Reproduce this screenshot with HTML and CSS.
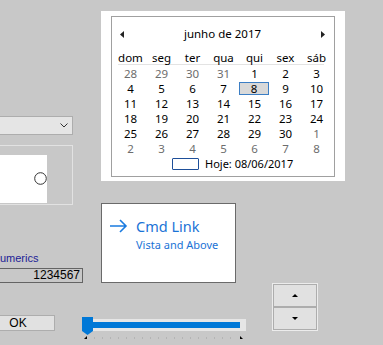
FILE: index.html
```html
<!DOCTYPE html>
<html lang="pt">
<head>
<meta charset="utf-8">
<link rel="stylesheet" href="styles.css">
</head>
<body>
<div class="page">
  <div class="top">
    <div class="left">
      <div class="combo">
        <svg class="chev" width="8" height="5" viewBox="0 0 8 5"><path d="M0.5 0.5 L4 4 L7.5 0.5" fill="none" stroke="#333" stroke-width="1"/></svg>
      </div>
      <div class="group">
        <div class="panel">
          <svg class="radio" width="13" height="13" viewBox="0 0 13 13"><circle cx="6.5" cy="6.5" r="5.8" fill="#fff" stroke="#333" stroke-width="1"/></svg>
        </div>
      </div>
      <div class="label">Numerics</div>
      <div class="textbox">1234567</div>
    </div>
    <div class="right">
      <div class="cal">
        <div class="cal-inner">
          <div class="cal-head">
            <svg width="4" height="7" viewBox="0 0 4 7"><path d="M4 0 L0 3.5 L4 7 Z" fill="#222"/></svg>
            <span class="cal-title">junho de 2017</span>
            <svg width="4" height="7" viewBox="0 0 4 7"><path d="M0 0 L4 3.5 L0 7 Z" fill="#222"/></svg>
          </div>
          <div class="cal-grid dow">
            <span>dom</span><span>seg</span><span>ter</span><span>qua</span><span>qui</span><span>sex</span><span>sáb</span>
          </div>
          <div class="cal-sep"></div>
          <div class="cal-grid days">
            <span class="o">28</span><span class="o">29</span><span class="o">30</span><span class="o">31</span><span>1</span><span>2</span><span>3</span>
            <span>4</span><span>5</span><span>6</span><span>7</span><span class="today">8</span><span>9</span><span>10</span>
            <span>11</span><span>12</span><span>13</span><span>14</span><span>15</span><span>16</span><span>17</span>
            <span>18</span><span>19</span><span>20</span><span>21</span><span>22</span><span>23</span><span>24</span>
            <span>25</span><span>26</span><span>27</span><span>28</span><span>29</span><span>30</span><span class="o">1</span>
            <span class="o">2</span><span class="o">3</span><span class="o">4</span><span class="o">5</span><span class="o">6</span><span class="o">7</span><span class="o">8</span>
          </div>
          <div class="cal-foot">
            <span class="hoje-box"></span>
            <span class="hoje-text">Hoje: 08/06/2017</span>
          </div>
        </div>
      </div>
      <div class="cmd">
        <svg class="cmd-arrow" width="18" height="20" viewBox="0 0 18 20"><path d="M0 10 H16 M10 4 L16 10 L10 16" fill="none" stroke="#1a7be0" stroke-width="1.6"/></svg>
        <div class="cmd-text">
          <div class="cmd-title">Cmd Link</div>
          <div class="cmd-sub">Vista and Above</div>
        </div>
      </div>
    </div>
  </div>
  <div class="bottom">
    <div class="btn">OK</div>
    <div class="slider">
      <div class="track"><div class="fill"></div></div>
      <svg class="thumb" width="11" height="18" viewBox="0 0 11 18"><path d="M0 0 H11 V14 L5.5 18 L0 14 Z" fill="#0078d7"/></svg>
      <svg class="ticks" width="164" height="4" viewBox="0 0 164 4">
        <path d="M5 0 L5 3 L2 3 Z" fill="#000"/>
        <path d="M158 0 L158 3 L161 3 Z" fill="#000"/>
        <g fill="#b4b4b4">
          <rect x="12" y="1" width="1" height="2"/><rect x="20" y="1" width="1" height="2"/><rect x="28" y="1" width="1" height="2"/><rect x="36" y="1" width="1" height="2"/><rect x="44" y="1" width="1" height="2"/><rect x="52" y="1" width="1" height="2"/><rect x="60" y="1" width="1" height="2"/><rect x="68" y="1" width="1" height="2"/><rect x="76" y="1" width="1" height="2"/><rect x="84" y="1" width="1" height="2"/><rect x="92" y="1" width="1" height="2"/><rect x="100" y="1" width="1" height="2"/><rect x="108" y="1" width="1" height="2"/><rect x="116" y="1" width="1" height="2"/><rect x="124" y="1" width="1" height="2"/><rect x="132" y="1" width="1" height="2"/><rect x="140" y="1" width="1" height="2"/><rect x="148" y="1" width="1" height="2"/>
        </g>
      </svg>
    </div>
    <div class="spin">
      <div class="spin-btn"><svg width="6" height="3" viewBox="0 0 6 3"><path d="M0 3 L3 0 L6 3 Z" fill="#000"/></svg></div>
      <div class="spin-btn"><svg width="6" height="3" viewBox="0 0 6 3"><path d="M0 0 L6 0 L3 3 Z" fill="#000"/></svg></div>
    </div>
  </div>
</div>
</body>
</html>
```

FILE: styles.css
```css
html, body {
  margin: 0;
  padding: 0;
}
body {
  background: #c8c8c8;
  width: 383px;
  height: 345px;
  overflow: hidden;
  font-family: "Noto Sans", "Open Sans", sans-serif;
}
.page {
  display: flex;
  flex-direction: column;
  width: 383px;
  height: 345px;
}
.top {
  display: flex;
  height: 283px;
  flex-shrink: 0;
}
.left {
  width: 101px;
  flex-shrink: 0;
  display: flex;
  flex-direction: column;
}
.combo {
  margin-top: 116px;
  margin-left: -30px;
  width: 103px;
  height: 19px;
  box-sizing: border-box;
  border: 1px solid #adadad;
  background: #e5e5e5;
  display: flex;
  justify-content: flex-end;
  align-items: center;
  padding-right: 4px;
}
.chev { display: block; margin-top: 1px; }
.group {
  margin-top: 10px;
  margin-left: -30px;
  width: 103px;
  height: 61px;
  box-sizing: border-box;
  border: 1px solid #e2e2e2;
  padding-top: 9px;
}
.panel {
  width: 76px;
  height: 48px;
  background: #fff;
  display: flex;
  justify-content: flex-end;
  align-items: center;
}
.radio { display: block; }
.label {
  margin-top: 47px;
  margin-left: -8px;
  font-family: "Liberation Sans", Arial, sans-serif;
  font-size: 11px;
  line-height: 13px;
  color: #1c1c96;
  white-space: nowrap;
}
.textbox {
  margin-top: 3px;
  margin-left: -30px;
  width: 113px;
  height: 15px;
  box-sizing: border-box;
  border: 1px solid #646464;
  font-family: "Liberation Sans", Arial, sans-serif;
  font-size: 12px;
  line-height: 13px;
  text-align: right;
  padding-right: 2px;
  color: #000;
}
.right {
  display: flex;
  flex-direction: column;
}
.cal {
  margin-top: 11px;
  width: 244px;
  height: 170px;
  box-sizing: border-box;
  background: #fff;
  padding: 5px 10px 6px 10px;
}
.cal-inner {
  height: 159px;
  border: 1px solid #a0a0a0;
  padding: 0 1px 0 3px;
  color: #000;
  font-size: 11.5px;
}
.cal-head {
  height: 34px;
  display: flex;
  align-items: center;
  justify-content: space-between;
  padding: 0 8px 0 5px;
}
.cal-head svg { display: block; }
.cal-title { font-size: 11.5px; line-height: 16px; }
.cal-grid {
  display: grid;
  grid-template-columns: repeat(7, 31px);
}
.cal-grid span {
  text-align: center;
  line-height: 15px;
  height: 15px;
  box-sizing: border-box;
}
.dow span { height: 13px; line-height: 13px; }
.cal-sep {
  height: 1px;
  background: #e3e3e3;
  margin: 0 9px 1px 3px;
}
.days .o { color: #6d6d6d; }
.days .today {
  background: #d9d9d9;
  border: 1px solid #3c7ec4;
  width: 30px;
  height: 13px;
  line-height: 11px;
  margin-top: 1px;
}
.cal-foot {
  display: flex;
  align-items: center;
  height: 15px;
  line-height: 15px;
  padding-left: 57px;
  gap: 6px;
}
.hoje-text { font-size: 11px; }
.hoje-box {
  display: block;
  width: 27px;
  height: 12px;
  box-sizing: border-box;
  border: 1px solid #1e4f99;
  border-radius: 1px;
}
.cmd {
  margin-top: 22px;
  width: 135px;
  height: 80px;
  box-sizing: border-box;
  background: #fff;
  border: 1px solid #6a6a6a;
  display: flex;
  align-items: flex-start;
  padding: 12px 0 0 8px;
}
.cmd-arrow { display: block; margin-right: 8px; flex-shrink: 0; }
.cmd-text { display: flex; flex-direction: column; }
.cmd-title {
  font-size: 14.5px;
  line-height: 21px;
  color: #1a73d6;
  white-space: nowrap;
}
.cmd-sub {
  font-size: 11px;
  line-height: 15px;
  color: #1a73d6;
  white-space: nowrap;
}
.bottom {
  display: flex;
  align-items: flex-start;
  height: 62px;
}
.btn {
  margin-top: 32px;
  margin-left: -19px;
  width: 74px;
  height: 16px;
  box-sizing: border-box;
  flex-shrink: 0;
  background: #e1e1e1;
  border: 1px solid #adadad;
  font-family: "Liberation Sans", Arial, sans-serif;
  font-size: 12px;
  line-height: 14px;
  text-align: center;
  color: #000;
}
.slider {
  position: relative;
  margin-left: 27px;
  margin-top: 34px;
  width: 164px;
  height: 22px;
  flex-shrink: 0;
}
.track {
  margin-top: 2px;
  height: 12px;
  box-sizing: border-box;
  background: #e6e6e6;
  padding: 3px 6px 3px 2px;
}
.fill {
  height: 6px;
  background: #0078d7;
}
.thumb {
  position: absolute;
  left: 0;
  top: 0;
  display: block;
}
.ticks {
  position: absolute;
  left: 0;
  top: 19px;
  display: block;
}
.spin {
  margin-left: 26px;
  width: 46px;
  height: 48px;
  box-sizing: border-box;
  border: 1px solid #ececec;
  display: flex;
  flex-direction: column;
  flex-shrink: 0;
}
.spin-btn {
  height: 23px;
  box-sizing: border-box;
  background: #e1e1e1;
  border: 1px solid #adadad;
  display: flex;
  align-items: center;
  justify-content: center;
}
.spin-btn svg { display: block; }
```
